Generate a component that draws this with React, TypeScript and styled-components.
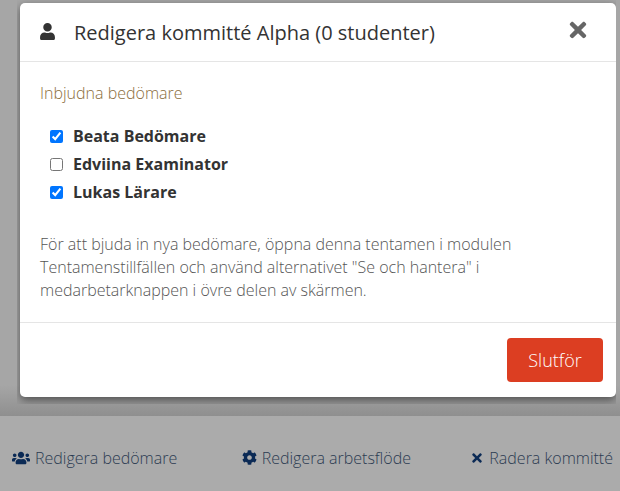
import React from 'react';
import styled, { createGlobalStyle } from 'styled-components';
import { FaUser, FaUsers, FaCog, FaTimes } from 'react-icons/fa';

const GlobalStyle = createGlobalStyle`
  html, body {
    margin: 0;
    padding: 0;
    background: #a8a8a8;
    font-family: "Open Sans", "Noto Sans", sans-serif;
  }
`;

type Reviewer = { name: string; invited: boolean };

const reviewers: Reviewer[] = [
  { name: 'Beata Bedömare', invited: true },
  { name: 'Edviina Examinator', invited: false },
  { name: 'Lukas Lärare', invited: true },
];

export default function App() {
  return (
    <Page>
      <GlobalStyle />
      <Backdrop>
        <ModalFrame>
          <Modal>
            <Header>
              <UserIcon size={17} color="#333" />
              <Title>Redigera kommitté Alpha (0 studenter)</Title>
              <CloseButton>
                <FaTimes size={24} />
              </CloseButton>
            </Header>
            <Body>
              <SectionLabel>Inbjudna bedömare</SectionLabel>
              <List>
                {reviewers.map((r) => (
                  <Row key={r.name}>
                    <input type="checkbox" defaultChecked={r.invited} />
                    {r.name}
                  </Row>
                ))}
              </List>
              <Help>
                För att bjuda in nya bedömare, öppna denna tentamen i modulen
                Tentamenstillfällen och använd alternativet "Se och hantera" i
                medarbetarknappen i övre delen av skärmen.
              </Help>
            </Body>
            <Footer>
              <Finish>Slutför</Finish>
            </Footer>
          </Modal>
        </ModalFrame>
      </Backdrop>
      <Actions>
        <Action>
          <FaUsers size={18} />
          Redigera bedömare
        </Action>
        <Action $shift={5}>
          <FaCog size={15} />
          Redigera arbetsflöde
        </Action>
        <Action>
          <FaTimes size={14} />
          Radera kommitté
        </Action>
      </Actions>
    </Page>
  );
}

const Page = styled.div`
  width: 620px;
  height: 491px;
  overflow: hidden;
  display: flex;
  flex-direction: column;
`;

const Backdrop = styled.div`
  height: 416px;
  flex: none;
  background: linear-gradient(#a6a6a6 0, #a6a6a6 385px, #8f8f8f 100%);
  padding-left: 17px;
  box-sizing: border-box;
`;

/* the modal's shadow is cut off at this box, as in the page behind it */
const ModalFrame = styled.div`
  width: 599px;
  height: 404px;
  padding: 3px 0 0 3px;
  box-sizing: border-box;
  overflow: hidden;
`;

const Modal = styled.div`
  width: 596px;
  height: 394px;
  background: #fff;
  border-radius: 5px;
  box-shadow: 0 3px 9px rgba(0, 0, 0, 0.5);
  display: flex;
  flex-direction: column;
`;

const Header = styled.div`
  height: 58px;
  flex: none;
  display: flex;
  align-items: center;
  padding: 0 16px 0 19px;
  border-bottom: 1px solid #e5e5e5;
`;

const UserIcon = styled(FaUser)`
  margin-bottom: 2px;
`;

const Title = styled.h4`
  margin: 0 0 0 18px;
  flex: 1;
  font-size: 20px;
  font-weight: 400;
  color: #333;
`;

const CloseButton = styled.span`
  display: flex;
  color: #666;
  margin: 0 10px 4px 0;
`;

const Body = styled.div`
  flex: 1;
  padding: 20px 20px 0;
`;

const SectionLabel = styled.div`
  font-size: 16px;
  line-height: 22px;
  font-weight: 300;
  color: #8a6d3b;
`;

const List = styled.div`
  margin-top: 18px;
  padding-left: 10px;
`;

const Row = styled.label`
  display: flex;
  align-items: center;
  gap: 10px;
  height: 28px;
  font-size: 16px;
  font-weight: 700;
  color: #333;

  input {
    margin: 0;
    width: 13px;
    height: 13px;
  }
`;

const Help = styled.p`
  margin: 27px 0 0;
  font-size: 16px;
  line-height: 23px;
  font-weight: 300;
  color: #555;
`;

const Footer = styled.div`
  flex: none;
  height: 74px;
  display: flex;
  justify-content: flex-end;
  align-items: center;
  padding-right: 13px;
  border-top: 1px solid #e5e5e5;
`;

const Finish = styled.button`
  width: 96px;
  height: 44px;
  border: none;
  border-radius: 4px;
  background: #dc3e22;
  color: #fff;
  font: 300 18px "Open Sans", sans-serif;
`;

const Actions = styled.div`
  flex: 1;
  background: #ababab;
  display: flex;
  align-items: center;
  justify-content: space-between;
  padding: 8px 7px 0 12px;
`;

const Action = styled.div<{ $shift?: number }>`
  display: flex;
  align-items: center;
  gap: 5px;
  margin-left: ${(p) => p.$shift ?? 0}px;
  font-size: 16px;
  font-weight: 300;
  color: #2c3b52;

  svg {
    color: #0b2a55;
  }
`;
